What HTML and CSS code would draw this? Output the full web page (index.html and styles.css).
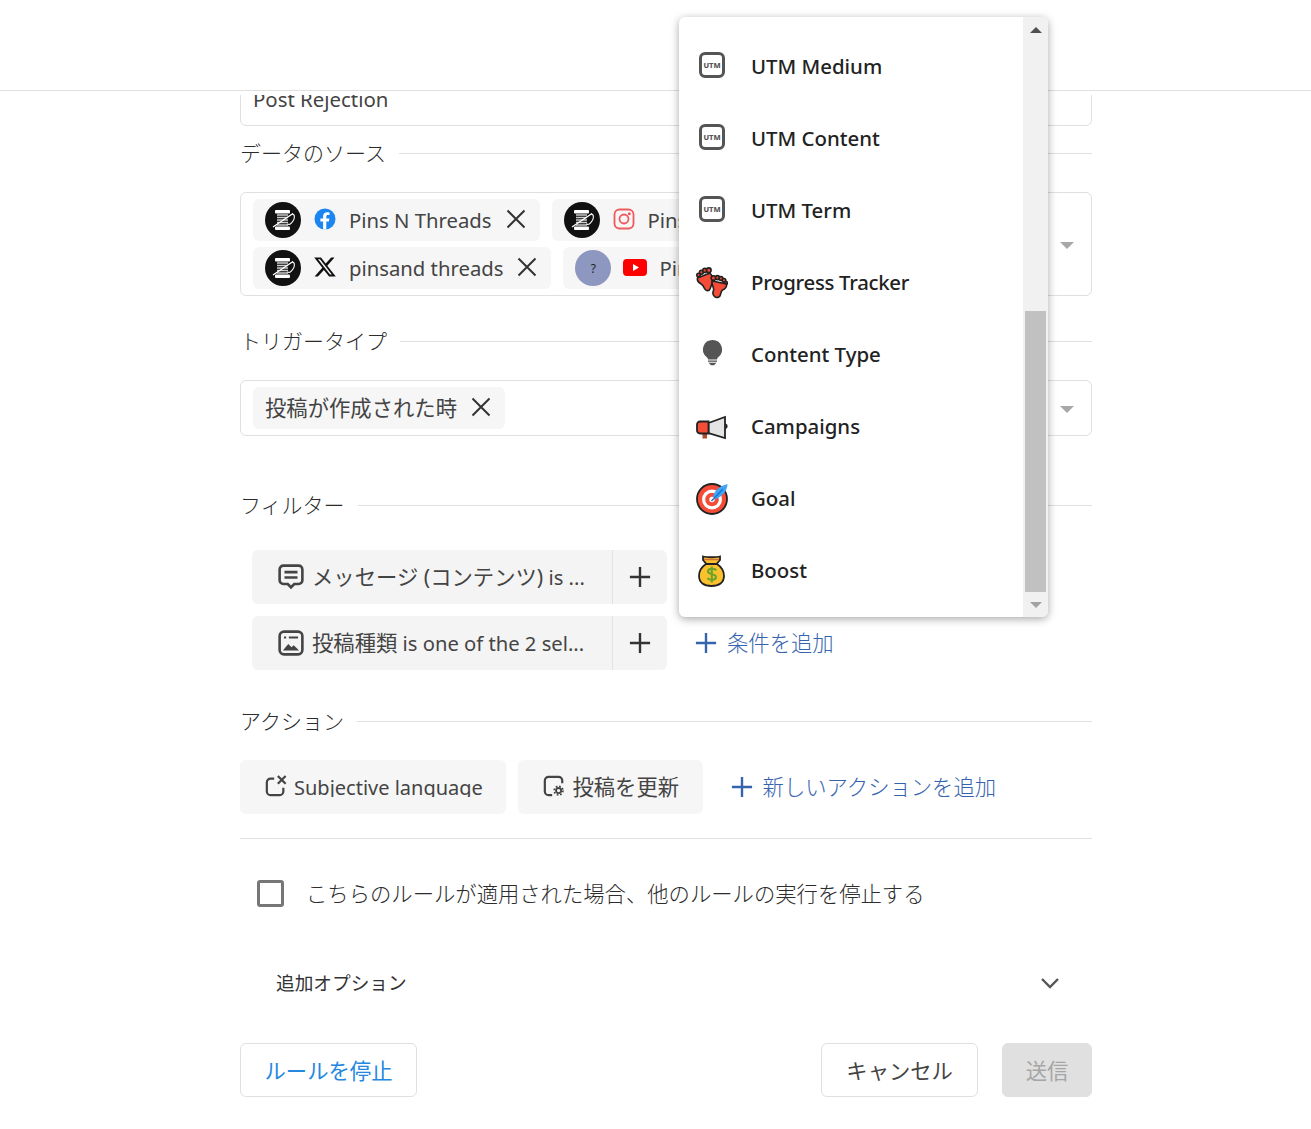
FILE: index.html
```html
<!DOCTYPE html>
<html lang="ja">
<head>
    <meta charset="UTF-8">
    <meta name="viewport" content="width=device-width, initial-scale=1.0">
    <title>Rule</title>
    <link rel="stylesheet" href="styles.css">
</head>
<body>
    <svg class="defs" width="0" height="0">
        <symbol id="spool" viewBox="0 0 36 36">
            <circle cx="18" cy="18" r="18" fill="#111"/>
            <rect x="10" y="8" width="15" height="3.500" rx="1" fill="#fff"/>
            <rect x="10" y="24.500" width="15" height="3.500" rx="1" fill="#fff"/>
            <path d="M12 13h11M12 15.500h11M12 18h11M12 20.500h11M12 23h11" stroke="#ccc" stroke-width="1.400"/>
            <path d="M8 25L28 11.500" stroke="#fff" stroke-width="1.400"/>
            <path d="M27 12c3 0 3 4 1 7s-3 4-6 3" stroke="#fff" stroke-width="1.100" fill="none"/>
        </symbol>
        <symbol id="cross" viewBox="0 0 24 24">
            <path d="M3.500 3.500l17 17M20.500 3.500l-17 17" stroke="#333" stroke-width="2" fill="none"/>
        </symbol>
        <symbol id="plus" viewBox="0 0 24 24">
            <path d="M12 1v22M1 12h22" stroke="currentColor" stroke-width="2.600" fill="none"/>
        </symbol>
    </svg>

    <header class="top-bar"></header>

    <main class="scroll-area">
        <div class="form">
            <div class="name-input">Post Rejection</div>

            <div class="section-title first">
                <span>データのソース</span>
            </div>
            <div class="select-box">
                <div class="chip">
                    <svg class="avatar"><use href="#spool"/></svg>
                    <svg class="net-icon" viewBox="0 0 24 24">
                        <circle cx="12" cy="12" r="10.500" fill="#1b86f0"/>
                        <path d="M13.300 22.500v-8.100h2.600l.5-3h-3.100V9.600c0-.9.400-1.600 1.700-1.600h1.500V5.400c-.7-.1-1.500-.2-2.300-.2-2.500 0-4.100 1.500-4.100 4.100v2.100H7.400v3h2.700v8.100z" fill="#fff"/>
                    </svg>
                    <span class="chip-label">Pins N Threads</span>
                    <svg class="chip-close"><use href="#cross"/></svg>
                </div>
                <div class="chip">
                    <svg class="avatar"><use href="#spool"/></svg>
                    <svg class="net-icon" viewBox="0 0 24 24" fill="none" stroke="#ef5a5f" stroke-width="1.800">
                        <rect x="2.500" y="2.500" width="19" height="19" rx="5"/>
                        <circle cx="12" cy="12" r="4.500"/>
                        <circle cx="17.300" cy="6.700" r=".6" fill="#ef5a5f"/>
                    </svg>
                    <span class="chip-label">Pins N Threads</span>
                    <svg class="chip-close"><use href="#cross"/></svg>
                </div>
                <div class="chip">
                    <svg class="avatar"><use href="#spool"/></svg>
                    <svg class="net-icon" viewBox="0 0 24 24">
                        <path d="M18.200 2.500h3.300l-7.200 8.300 8.500 10.700h-6.700l-5.200-6.500-6 6.500H1.600l7.700-8.800L1.200 2.500h6.800l4.700 5.900zM17 19.600h1.800L7 4.300H5z" fill="#111"/>
                    </svg>
                    <span class="chip-label">pinsand threads</span>
                    <svg class="chip-close"><use href="#cross"/></svg>
                </div>
                <div class="chip">
                    <span class="avatar avatar-blank">?</span>
                    <svg class="net-icon" viewBox="0 0 24 24">
                        <rect x="0" y="4" width="24" height="17" rx="4" fill="#f00"/>
                        <path d="M10 9l6 3.500-6 3.500z" fill="#fff"/>
                    </svg>
                    <span class="chip-label">Pins N Threads</span>
                    <svg class="chip-close"><use href="#cross"/></svg>
                </div>
                <span class="caret"></span>
            </div>

            <div class="section-title trigger">
                <span>トリガータイプ</span>
            </div>
            <div class="select-box">
                <div class="chip">
                    <span class="chip-label ja">投稿が作成された時</span>
                    <svg class="chip-close"><use href="#cross"/></svg>
                </div>
                <span class="caret"></span>
            </div>

            <div class="section-title filter">
                <span>フィルター</span>
            </div>
            <div class="filters">
                <div class="filter-row">
                    <div class="filter-group">
                        <div class="filter-main">
                            <svg class="btn-icon" viewBox="0 0 24 24" fill="none" stroke="#444" stroke-width="2.400">
                                <path d="M5 1.500h14a3.500 3.500 0 0 1 3.500 3.500v10a3.500 3.500 0 0 1-3.500 3.500h-4l-3 3-3-3H5A3.500 3.500 0 0 1 1.500 15V5A3.500 3.500 0 0 1 5 1.500z"/>
                                <path d="M6 7.500h12M6 12.500h12"/>
                            </svg>
                            <span class="filter-text"><span class="ja">メッセージ (コンテンツ)</span> is ...</span>
                        </div>
                        <div class="filter-add"><svg class="plus-icon"><use href="#plus"/></svg></div>
                    </div>
                </div>
                <div class="filter-row">
                    <div class="filter-group">
                        <div class="filter-main">
                            <svg class="btn-icon" viewBox="0 0 24 24" fill="none" stroke="#444" stroke-width="2.400">
                                <rect x="1.500" y="1.500" width="21" height="21" rx="4"/>
                                <path d="M5.500 7h2M10 7h8.500" stroke-width="1.800"/>
                                <path d="M4.500 19l5-6 3 3 2-2 5 5z" fill="#444" stroke="none"/>
                            </svg>
                            <span class="filter-text"><span class="ja">投稿種類</span> is one of the 2 sel...</span>
                        </div>
                        <div class="filter-add"><svg class="plus-icon"><use href="#plus"/></svg></div>
                    </div>
                    <div class="link-add add-condition">
                        <svg class="plus-icon"><use href="#plus"/></svg>
                        <span>条件を追加</span>
                    </div>
                </div>
            </div>

            <div class="section-title action">
                <span>アクション</span>
            </div>
            <div class="actions">
                <div class="action-btn subjective">
                    <svg class="action-icon" viewBox="0 0 24 24" fill="none" stroke="#444" stroke-width="2.400">
                        <path d="M10 4H6a4 4 0 0 0-4 4v10a4 4 0 0 0 4 4h10a4 4 0 0 0 4-4v-4"/>
                        <path d="M14 1l8.500 8.500M22.500 1L14 9.500"/>
                    </svg>
                    <span class="action-text clipped">Subjective language</span>
                </div>
                <div class="action-btn">
                    <svg class="action-icon" viewBox="0 0 24 24" fill="none" stroke="#444" stroke-width="2.400">
                        <path d="M10 22H6a4 4 0 0 1-4-4V6a4 4 0 0 1 4-4h11a4 4 0 0 1 4 4v3"/>
                        <circle cx="17" cy="17" r="2.800" stroke-width="2"/>
                        <circle cx="17" cy="17" r="4.800" stroke-width="1.800" stroke-dasharray="1.900 1.870"/>
                    </svg>
                    <span class="action-text ja">投稿を更新</span>
                </div>
                <div class="link-add add-action">
                    <svg class="plus-icon"><use href="#plus"/></svg>
                    <span>新しいアクションを追加</span>
                </div>
            </div>

            <div class="divider"></div>

            <label class="stop-row">
                <span class="checkbox"></span>
                <span class="stop-text">こちらのルールが適用された場合、他のルールの実行を停止する</span>
            </label>

            <div class="options-row">
                <span>追加オプション</span>
                <svg class="chevron" viewBox="0 0 20 12" fill="none" stroke="#555" stroke-width="2.400">
                    <path d="M2 2l8 8 8-8"/>
                </svg>
            </div>

            <div class="form-footer">
                <button class="btn btn-stop">ルールを停止</button>
                <div class="footer-right">
                    <button class="btn btn-cancel">キャンセル</button>
                    <button class="btn btn-send">送信</button>
                </div>
            </div>
        </div>
    </main>

    <!-- Dropdown menu -->
    <div class="menu">
        <ul class="menu-list">
            <li class="menu-item">
                <span class="menu-icon"><span class="utm">UTM</span></span>
                <span>UTM Medium</span>
            </li>
            <li class="menu-item">
                <span class="menu-icon"><span class="utm">UTM</span></span>
                <span>UTM Content</span>
            </li>
            <li class="menu-item">
                <span class="menu-icon"><span class="utm">UTM</span></span>
                <span>UTM Term</span>
            </li>
            <li class="menu-item">
                <span class="menu-icon">
                    <svg viewBox="0 0 32 32" stroke="#222" stroke-width="1.600" fill="#f44c36">
                        <circle cx="2.600" cy="8" r="1.800"/>
                        <circle cx="5.400" cy="5.200" r="1.900"/>
                        <circle cx="8.800" cy="3.400" r="2"/>
                        <circle cx="12.800" cy="3.200" r="2.300"/>
                        <path d="M1.500 11L14 6c3 3 3 8 1.500 12L14 22c-1 2.500-4.500 2-5.500-.5-1-2.500-1.500-3.500-4-5S1 13 1.500 11z"/>
                        <circle cx="17.500" cy="11" r="2.300"/>
                        <circle cx="21.500" cy="10.600" r="2"/>
                        <circle cx="25" cy="11.500" r="1.900"/>
                        <circle cx="28" cy="13.300" r="1.800"/>
                        <circle cx="30" cy="16" r="1.500"/>
                        <path d="M16 14l14.500 3c.5 3-1.500 5-4 6-1.500 1-1.500 3-2 4.500-.5 3-4 4-6 2s-2-4-1-6-2-5.500-1.500-9.500z"/>
                    </svg>
                </span>
                <span class="tracker-label">Progress Tracker</span>
            </li>
            <li class="menu-item">
                <span class="menu-icon">
                    <svg viewBox="0 0 32 32" fill="#555">
                        <path d="M16.500 1a9.500 9.500 0 0 0-6 16.900c1 .8 1.500 1.600 1.500 2.600h9c0-1 .5-1.800 1.500-2.600a9.500 9.500 0 0 0-6-16.900z"/>
                        <rect x="12" y="21.500" width="9" height="1.300"/>
                        <path d="M12.500 23.800h8l-2.500 2.400h-3z"/>
                    </svg>
                </span>
                <span>Content Type</span>
            </li>
            <li class="menu-item">
                <span class="menu-icon">
                    <svg viewBox="0 0 32 32" stroke="#222" stroke-width="1.800">
                        <path d="M29 13c2.400 1 2.400 3.500 0 4.500" fill="#e6e6e6"/>
                        <path d="M12.500 12L29 6v21l-16.500-5z" fill="#e4e4e4"/>
                        <rect x="6.500" y="21" width="4.500" height="6.500" fill="#b3492f" stroke="none"/>
                        <path d="M4 10.500h8.500v12H4a3 3 0 0 1-3-3v-6a3 3 0 0 1 3-3z" fill="#f44c36"/>
                    </svg>
                </span>
                <span>Campaigns</span>
            </li>
            <li class="menu-item">
                <span class="menu-icon">
                    <svg viewBox="0 0 32 32">
                        <circle cx="16" cy="16" r="15" fill="#f44c36" stroke="#222" stroke-width="1.800"/>
                        <circle cx="16" cy="16.500" r="10" fill="#fff"/>
                        <circle cx="16" cy="16.500" r="6.800" fill="#f44c36"/>
                        <circle cx="16" cy="16.500" r="2.700" fill="#fff"/>
                        <path d="M17 14C18 8 23 3 31.500 1 31.500 7 27 13 20 16z" fill="#42a5f5"/>
                        <path d="M15.500 18L27 6" stroke="#1976d2" stroke-width="1.500"/>
                    </svg>
                </span>
                <span>Goal</span>
            </li>
            <li class="menu-item">
                <span class="menu-icon">
                    <svg viewBox="0 0 32 32" stroke="#222" stroke-width="1.800">
                        <path d="M10 9C5.500 12 3 16.500 3 21c0 6.500 5 10 12.500 10S28 27.500 28 21c0-4.500-2.500-9-7-12z" fill="#fbc02d"/>
                        <path d="M7 1.500c3 1 14 1 17 0v3.500l-3.500 4h-10L7 5z" fill="#fbc02d"/>
                        <path d="M8 4.500h15" stroke="#d2703a" stroke-width="1.600"/>
                        <path d="M20 15.500c-1-2.500-8-2.500-8 1 0 3.500 8 2 8 5.500s-7 3.500-8.500 1M15.800 11.500v16" fill="none" stroke="#6aa52a" stroke-width="2.100"/>
                    </svg>
                </span>
                <span>Boost</span>
            </li>
        </ul>
        <div class="scrollbar">
            <span class="arrow-up"></span>
            <span class="thumb"></span>
            <span class="arrow-down"></span>
        </div>
    </div>
</body>
</html>
```

FILE: styles.css
```css
/* ======= Page ======= */
* {
    box-sizing: border-box;
}

html, body {
    height: 100%;
}

body {
    margin: 0;
    height: 1129px;
    overflow: hidden;
    position: relative;
    background: #fff;
    color: #333;
    font-family: "Noto Sans", "Noto Sans CJK JP", sans-serif;
    font-size: 21.33px;
}

.defs {
    position: absolute;
}

.ja {
    font-size: 21.33px;
}

.top-bar {
    height: 91px;
    background: #fff;
    border-bottom: 1px solid #e0e0e0;
}

.scroll-area {
    height: 1034px;
    margin-top: 4px;
    overflow: hidden;
}

.form {
    width: 852px;
    margin-left: 240px;
}

/* Inputs */
.name-input {
    height: 56px;
    margin-top: -25px;
    padding: 2px 12px 0;
    display: flex;
    align-items: center;
    border: 1px solid #e0e0e0;
    border-radius: 6px;
    font-size: 20.4px;
    color: #444;
}

.section-title {
    height: 32px;
    display: flex;
    align-items: center;
    gap: 13px;
    color: #2c2c2c;
    font-size: 21px;
    font-weight: 300;
    white-space: nowrap;
}

.section-title span {
    padding-bottom: 2px;
}

.section-title::after {
    content: "";
    flex: 1;
    height: 1px;
    background: #e0e0e0;
}

.section-title.first { margin-top: 11px; margin-bottom: 23px; }
.section-title.trigger { margin-top: 29px; margin-bottom: 23px; }
.section-title.filter { margin-top: 53px; margin-bottom: 29px; }
.section-title.action { margin-top: 35px; margin-bottom: 23px; }

.select-box {
    position: relative;
    display: flex;
    flex-wrap: wrap;
    gap: 6px 12px;
    padding: 6px 12px;
    border: 1px solid #e0e0e0;
    border-radius: 6px;
}

.caret {
    position: absolute;
    right: 17px;
    top: 50%;
    margin-top: -2px;
    border-left: 7px solid transparent;
    border-right: 7px solid transparent;
    border-top: 7px solid #a8a8a8;
}

.chip {
    height: 42px;
    display: flex;
    align-items: center;
    padding: 0 12px;
    background: #f6f6f6;
    border-radius: 6px;
    white-space: nowrap;
}

.avatar {
    width: 36px;
    height: 36px;
    flex: none;
}

.avatar-blank {
    display: flex;
    align-items: center;
    justify-content: center;
    border-radius: 50%;
    background: #8d97c0;
    color: #222;
    font-size: 12px;
}

.net-icon {
    width: 24px;
    height: 24px;
    flex: none;
    margin: -3px 12px 0;
}

.chip-label {
    font-size: 20.3px;
    color: #444;
}

.chip-label.ja {
    font-size: 21.33px;
    padding-bottom: 3px;
}

.chip-close {
    width: 24px;
    height: 24px;
    margin: -3px 0 0 12px;
    flex: none;
}

/* Filters */
.filters {
    display: flex;
    flex-direction: column;
    gap: 12px;
    padding-left: 12px;
}

.filter-row {
    display: flex;
    align-items: center;
    gap: 28px;
}

.filter-group {
    width: 415px;
    height: 54px;
    display: flex;
    background: #f4f4f4;
    border-radius: 6px;
}

.filter-main {
    flex: 1;
    display: flex;
    align-items: center;
    gap: 8px;
    padding-left: 26px;
    border-right: 1px solid #e2e2e2;
    white-space: nowrap;
}

.btn-icon {
    width: 26px;
    height: 26px;
    flex: none;
}

.filter-text {
    font-size: 20.2px;
    padding-bottom: 3px;
    color: #444;
}

.filter-add {
    width: 54px;
    display: flex;
    align-items: center;
    justify-content: center;
    color: #333;
}

.plus-icon {
    width: 22px;
    height: 22px;
    flex: none;
}

.link-add {
    display: flex;
    align-items: center;
    gap: 10px;
    color: #3563ad;
    font-weight: 300;
    white-space: nowrap;
}

.link-add span {
    padding-bottom: 3px;
}

/* Actions */
.actions {
    display: flex;
    align-items: center;
    gap: 12px;
}

.action-btn {
    height: 54px;
    display: flex;
    align-items: center;
    gap: 7px;
    padding: 0 23.5px 0 25px;
    background: #f6f6f6;
    border-radius: 6px;
    white-space: nowrap;
}

.action-icon {
    width: 22px;
    height: 22px;
    flex: none;
    margin-top: -3px;
}

.action-text {
    font-size: 20px;
    color: #444;
}

.action-text.ja {
    font-size: 21.33px;
    padding-bottom: 3px;
}

/* the label is cut just under the baseline */
.action-text.clipped {
    height: 20px;
    line-height: 22px;
    overflow: hidden;
}

.add-action {
    margin-left: 16px;
}

.divider {
    height: 1px;
    margin-top: 24px;
    background: #e0e0e0;
}

.stop-row {
    height: 27px;
    margin-top: 41px;
    padding-left: 17px;
    display: flex;
    align-items: center;
    gap: 22px;
    color: #2c2c2c;
    font-weight: 300;
    white-space: nowrap;
}

.stop-text {
    padding-bottom: 3px;
}

.checkbox {
    width: 27px;
    height: 27px;
    border: 3px solid #777;
    border-radius: 3px;
    flex: none;
}

.options-row {
    height: 32px;
    margin-top: 60px;
    padding: 0 32px 0 36px;
    display: flex;
    align-items: center;
    justify-content: space-between;
    font-size: 18.67px;
    color: #333;
}

.options-row span {
    padding-bottom: 3px;
}

.chevron {
    width: 20px;
    height: 12px;
}

.form-footer {
    margin-top: 44px;
    display: flex;
    justify-content: space-between;
}

.footer-right {
    display: flex;
    gap: 24px;
}

.btn {
    height: 54px;
    padding: 0 23.5px 2px;
    border: 1px solid #e0e0e0;
    border-radius: 6px;
    background: #fff;
    color: #444;
    font-family: inherit;
    font-size: 21.33px;
}

.btn-stop {
    color: #2488e0;
}

.btn-cancel {
    padding: 0 24px 2px;
}

.btn-send {
    padding: 0 22.7px 2px;
    background: #e0e0e0;
    color: #a6a6a6;
}

/* Dropdown menu */
.menu {
    position: absolute;
    left: 679px;
    top: 17px;
    width: 369px;
    height: 600px;
    display: flex;
    background: #fff;
    border-radius: 6px;
    overflow: hidden;
    box-shadow: 0 2px 8px rgba(0, 0, 0, 0.35);
}

.menu-list {
    flex: 1;
    margin: 0;
    padding: 13px 0 11px;
    list-style: none;
}

.menu-item {
    height: 72px;
    display: flex;
    align-items: center;
    gap: 23px;
    padding-left: 17px;
    font-size: 20.4px;
    font-weight: 500;
    color: #222;
}

.tracker-label {
    letter-spacing: -0.3px;
}

.menu-icon {
    width: 32px;
    height: 32px;
    flex: none;
    display: flex;
    align-items: center;
    justify-content: center;
    margin-top: 2px;
}

.menu-icon svg {
    width: 32px;
    height: 32px;
}

.utm {
    width: 26px;
    height: 26px;
    margin-top: -4px;
    display: flex;
    align-items: center;
    justify-content: center;
    border: 3px solid #555;
    border-radius: 6px;
    color: #555;
    font-size: 7.5px;
    font-weight: 800;
}

.scrollbar {
    width: 25px;
    display: flex;
    flex-direction: column;
    align-items: center;
    justify-content: flex-end;
    position: relative;
    background: #f1f1f1;
}

.thumb {
    width: 21px;
    height: 281px;
    background: #c1c1c1;
}

.arrow-down {
    width: 100%;
    height: 25px;
    display: flex;
    align-items: center;
    justify-content: center;
}

.arrow-down::before {
    content: "";
    border-left: 6px solid transparent;
    border-right: 6px solid transparent;
    border-top: 6px solid #a3a3a3;
}

.arrow-up {
    position: absolute;
    top: 10px;
    border-left: 6px solid transparent;
    border-right: 6px solid transparent;
    border-bottom: 6px solid #505050;
}
```
